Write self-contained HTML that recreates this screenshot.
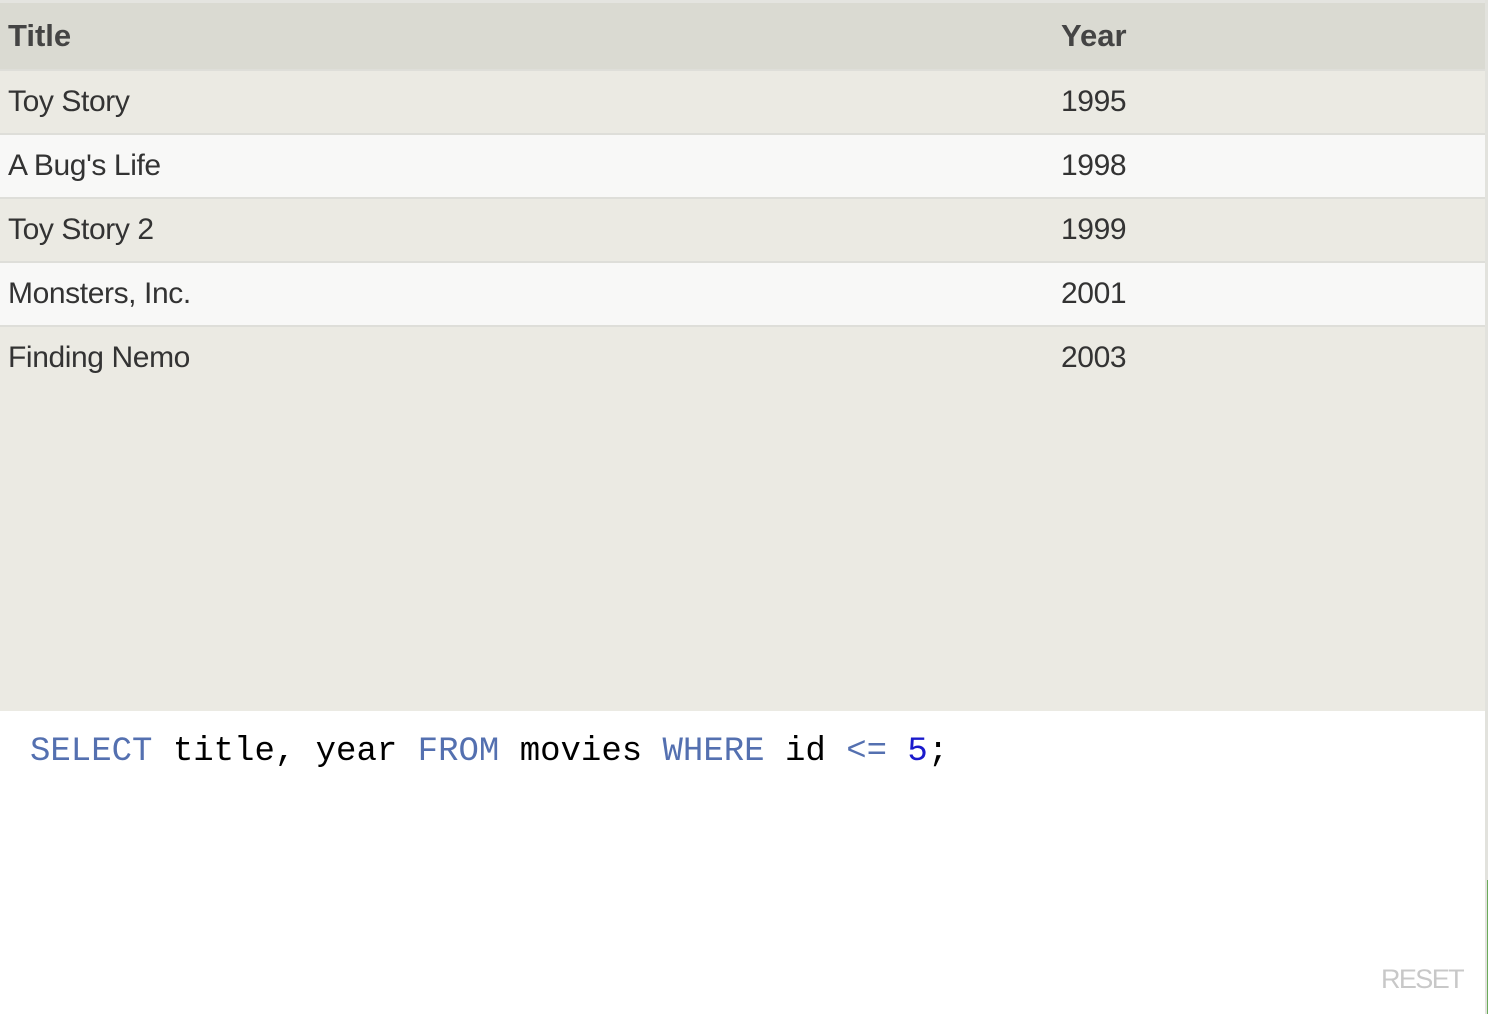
<!DOCTYPE html>
<html><head><meta charset="utf-8">
<style>
html,body{margin:0;padding:0;width:1488px;height:1014px;overflow:hidden;background:#fff;}
.wrap{position:absolute;left:0;top:0;width:1485px;height:1014px;}
.topstrip{position:absolute;left:0;top:0;width:1485px;height:3px;background:#e4e4e0;}
.rstrip{position:absolute;left:1485px;top:0;width:3px;height:1014px;background:#e2e2dd;}
.green{position:absolute;left:1487px;top:880px;width:1px;height:134px;background:#6aaa5a;}
.tbl{position:absolute;left:0;top:3px;width:1485px;height:708px;background:#ebeae3;}
.row{position:absolute;left:0;width:1485px;height:62px;font-family:"Liberation Sans",sans-serif;font-size:30px;letter-spacing:-0.4px;color:#333;}
.row span{position:absolute;top:50%;transform:translateY(-50%);}
.c1{left:8px}.c2{left:1061px}
.hd{top:0;height:66px;background:#dadad2;font-weight:bold;color:#444;font-size:31px;letter-spacing:0;}
.sep{position:absolute;left:0;width:1485px;height:2px;background:#deded9;}
.code{position:absolute;left:30px;top:731px;font-family:"Liberation Mono",monospace;font-size:34px;color:#000;white-space:pre;line-height:42px;}
.k{color:#5470b0}.n{color:#1a1acc}
.reset{position:absolute;left:1381px;top:964px;font-family:"Liberation Sans",sans-serif;font-size:27px;color:#c8c8c8;letter-spacing:-1.6px;}
</style></head><body>
<div class="wrap">
<div class="topstrip"></div>
<div class="tbl">
 <div class="row hd"><span class="c1">Title</span><span class="c2">Year</span></div>
 <div class="sep" style="top:66px"></div>
 <div class="row" style="top:68px;background:#ebeae3"><span class="c1">Toy Story</span><span class="c2">1995</span></div>
 <div class="sep" style="top:130px"></div>
 <div class="row" style="top:132px;background:#f8f8f7"><span class="c1">A Bug's Life</span><span class="c2">1998</span></div>
 <div class="sep" style="top:194px"></div>
 <div class="row" style="top:196px;background:#ebeae3"><span class="c1">Toy Story 2</span><span class="c2">1999</span></div>
 <div class="sep" style="top:258px"></div>
 <div class="row" style="top:260px;background:#f8f8f7"><span class="c1">Monsters, Inc.</span><span class="c2">2001</span></div>
 <div class="sep" style="top:322px"></div>
 <div class="row" style="top:324px;background:#ebeae3"><span class="c1">Finding Nemo</span><span class="c2">2003</span></div>
</div>
<div class="code"><span class="k">SELECT</span> title, year <span class="k">FROM</span> movies <span class="k">WHERE</span> id <span class="k">&lt;=</span> <span class="n">5</span>;</div>
<div class="reset">RESET</div>
</div>
<div class="rstrip"></div>
<div class="green"></div>
</body></html>
